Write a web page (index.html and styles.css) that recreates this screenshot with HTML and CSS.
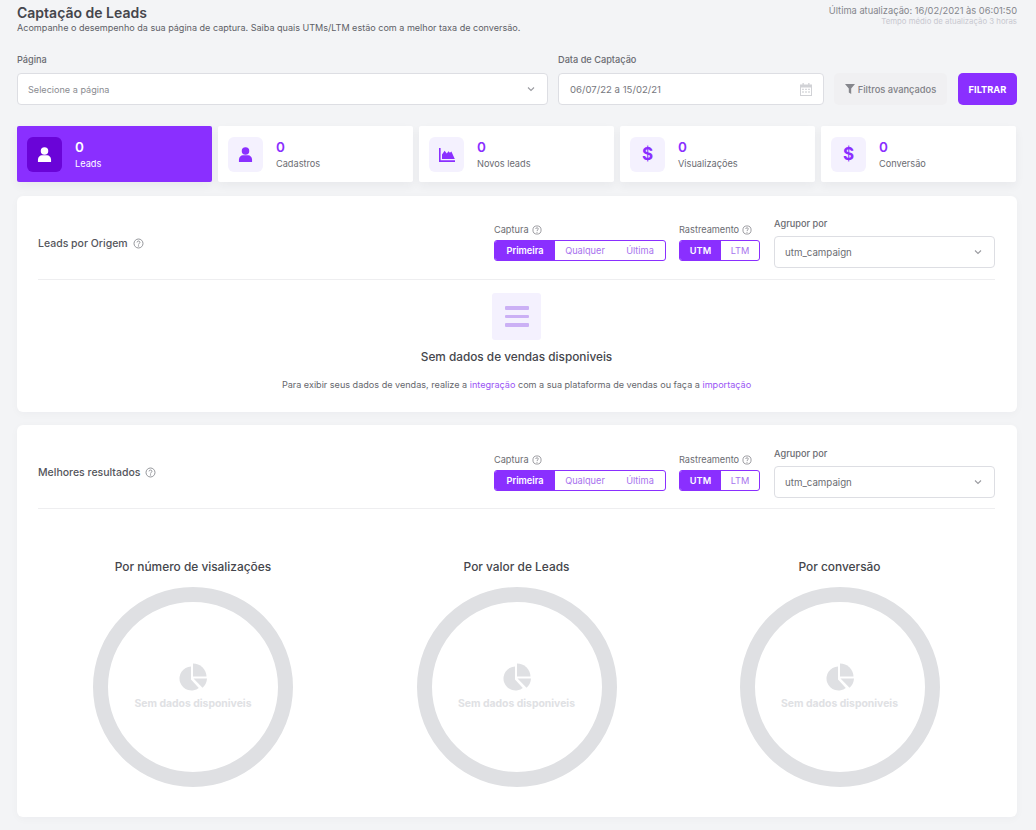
FILE: index.html
```html
<!DOCTYPE html>
<html lang="pt-BR">
<head>
<meta charset="utf-8">
<title>Captação de Leads</title>
<link rel="stylesheet" href="styles.css">
</head>
<body>
<svg class="defs" width="0" height="0" aria-hidden="true">
  <symbol id="user" viewBox="0 0 16 16"><circle cx="8" cy="4.200" r="4"/><path d="M1 16v-2.400C1 10.600 3.400 8.800 5 8.800h6c1.600 0 4 1.800 4 4.800V16z"/></symbol>
  <symbol id="area" viewBox="0 0 16 14"><path d="M0 0h1.600v12.200H16V14H0z"/><path d="M3 11V6.500L5.600 2.800l2.200 2.600 1.700-2.200 1.400 1.600 1.500-1.200L15.800 11z"/></symbol>
  <symbol id="help" viewBox="0 0 12 12"><circle cx="6" cy="6" r="4.900" fill="none" stroke="currentColor"/><path d="M4.400 4.800C4.400 3.900 5.100 3.300 6 3.300s1.600.6 1.600 1.400C7.600 5.900 6 5.900 6 7.200" fill="none" stroke="currentColor"/><circle cx="6" cy="8.700" r=".7" fill="currentColor"/></symbol>
  <symbol id="chev" viewBox="0 0 8 6"><path d="M1 1.500l3 3 3-3" fill="none" stroke="currentColor" stroke-width="1.100"/></symbol>
  <symbol id="pie" viewBox="0 0 30 28"><path d="M13 3.500A12 12 0 1 0 20.800 25L13 16.500z"/><path d="M15 .5A13.500 13.500 0 0 1 28.500 13.500H15z"/><path d="M15.500 15.500H29A13 13 0 0 1 24.500 24.700z"/></symbol>
</svg>
<main class="page">
  <header class="top">
    <div>
      <h1 class="title">Captação de Leads</h1>
      <p class="subtitle">Acompanhe o desempenho da sua página de captura. Saiba quais UTMs/LTM estão com a melhor taxa de conversão.</p>
    </div>
    <div class="updated">
      <div class="updated-main">Última atualização: 16/02/2021 às 06:01:50</div>
      <div class="updated-sub">Tempo médio de atualização 3 horas</div>
    </div>
  </header>

  <section class="filters">
    <div class="field field-page">
      <label class="field-label">Página</label>
      <div class="input"><span class="placeholder">Selecione a página</span><svg class="chev"><use href="#chev"/></svg></div>
    </div>
    <div class="field field-date">
      <label class="field-label">Data de Captação</label>
      <div class="input"><span class="date-value">06/07/22 a 15/02/21</span>
        <svg class="cal" viewBox="0 0 12 13"><path d="M2.500 0h1.300v1.500h4.400V0h1.300v1.500H12V13H0V1.500h2.500zM1 4.500V12h10V4.500z"/><path d="M2.200 5.700h1.600v1.400H2.200zM5.200 5.700h1.600v1.400H5.200zM8.200 5.700h1.600v1.400H8.200zM2.200 8.300h1.600v1.400H2.200zM5.200 8.300h1.600v1.400H5.200zM8.200 8.300h1.600v1.400H8.200z"/></svg>
      </div>
    </div>
    <button class="btn-adv"><svg class="funnel" viewBox="0 0 10 10"><path d="M0 0h10L6.200 4.600V10L3.800 8.400V4.600z"/></svg>Filtros avançados</button>
    <button class="btn-go">FILTRAR</button>
  </section>

  <section class="cards">
    <div class="card card-active"><div class="card-icon"><svg class="ic-user"><use href="#user"/></svg></div><div><div class="card-num">0</div><div class="card-label">Leads</div></div></div>
    <div class="card"><div class="card-icon"><svg class="ic-user"><use href="#user"/></svg></div><div><div class="card-num">0</div><div class="card-label">Cadastros</div></div></div>
    <div class="card"><div class="card-icon"><svg class="ic-area"><use href="#area"/></svg></div><div><div class="card-num">0</div><div class="card-label">Novos leads</div></div></div>
    <div class="card"><div class="card-icon"><span class="dollar">$</span></div><div><div class="card-num">0</div><div class="card-label">Visualizações</div></div></div>
    <div class="card"><div class="card-icon"><span class="dollar">$</span></div><div><div class="card-num">0</div><div class="card-label">Conversão</div></div></div>
  </section>

  <section class="panel panel-origin">
    <div class="panel-head">
      <div class="panel-title">Leads por Origem <svg class="help"><use href="#help"/></svg></div>
      <div class="controls">
        <div class="ctl">
          <div class="ctl-label">Captura <svg class="help help-s"><use href="#help"/></svg></div>
          <div class="seg seg-3"><span class="seg-on seg-w1">Primeira</span><span class="seg-w2">Qualquer</span><span class="seg-w3">Última</span></div>
        </div>
        <div class="ctl">
          <div class="ctl-label">Rastreamento <svg class="help help-s"><use href="#help"/></svg></div>
          <div class="seg seg-2"><span class="seg-on seg-w4">UTM</span><span class="seg-w5">LTM</span></div>
        </div>
        <div class="ctl ctl-group">
          <div class="group-label">Agrupor por</div>
          <div class="input input-group"><span class="group-value">utm_campaign</span><svg class="chev"><use href="#chev"/></svg></div>
        </div>
      </div>
    </div>
    <div class="empty">
      <div class="empty-icon"><i></i><i></i><i></i></div>
      <h2 class="empty-title">Sem dados de vendas disponiveis</h2>
      <p class="empty-text">Para exibir seus dados de vendas, realize a <a href="#">integração</a> com a sua plataforma de vendas ou faça a <a href="#">importação</a></p>
    </div>
  </section>

  <section class="panel panel-best">
    <div class="panel-head">
      <div class="panel-title">Melhores resultados <svg class="help"><use href="#help"/></svg></div>
      <div class="controls">
        <div class="ctl">
          <div class="ctl-label">Captura <svg class="help help-s"><use href="#help"/></svg></div>
          <div class="seg seg-3"><span class="seg-on seg-w1">Primeira</span><span class="seg-w2">Qualquer</span><span class="seg-w3">Última</span></div>
        </div>
        <div class="ctl">
          <div class="ctl-label">Rastreamento <svg class="help help-s"><use href="#help"/></svg></div>
          <div class="seg seg-2"><span class="seg-on seg-w4">UTM</span><span class="seg-w5">LTM</span></div>
        </div>
        <div class="ctl ctl-group">
          <div class="group-label">Agrupor por</div>
          <div class="input input-group"><span class="group-value">utm_campaign</span><svg class="chev"><use href="#chev"/></svg></div>
        </div>
      </div>
    </div>
    <div class="charts">
      <div class="chart"><h3 class="chart-title">Por número de visalizações</h3><div class="ring"><svg class="pie"><use href="#pie"/></svg><span class="ring-text">Sem dados disponiveis</span></div></div>
      <div class="chart"><h3 class="chart-title">Por valor de Leads</h3><div class="ring"><svg class="pie"><use href="#pie"/></svg><span class="ring-text">Sem dados disponiveis</span></div></div>
      <div class="chart"><h3 class="chart-title">Por conversão</h3><div class="ring"><svg class="pie"><use href="#pie"/></svg><span class="ring-text">Sem dados disponiveis</span></div></div>
    </div>
  </section>
</main>
</body>
</html>
```

FILE: styles.css
```css
* { box-sizing: border-box; }
html, body { margin: 0; padding: 0; }
body {
  background: #f3f4f6;
  font-family: Inter, "Noto Sans", sans-serif;
  color: #3f4147;
  overflow: hidden;
  height: 830px;
}
.defs { position: absolute; }
.page { width: 1036px; padding: 4px 19px 0 17px; }

.top { display: flex; justify-content: space-between; height: 46px; }
.title { margin: 0; font-size: 14px; line-height: 17px; font-weight: 600; color: #45464c; }
.subtitle { margin: 1px 0 0; font-size: 9.050px; line-height: 12px; color: #5e5f66; }
.updated { text-align: right; padding-top: 1px; }
.updated-main { font-size: 9.300px; line-height: 12px; color: #85868c; }
.updated-sub { font-size: 7.800px; line-height: 9px; color: #c8c8d0; }

.filters { display: flex; align-items: flex-end; height: 55px; }
.field-label { display: block; font-size: 9.200px; line-height: 12px; font-weight: 500; color: #6a6b71; margin-bottom: 7px; }
.field-page { width: 531px; margin-right: 10px; }
.field-date { width: 266px; margin-right: 10px; }
.input {
  height: 32px; background: #fff; border: 1px solid #dddee3; border-radius: 4px;
  display: flex; align-items: center; justify-content: space-between;
}
.field-page .input { padding: 0 12px 0 10px; }
.field-date .input { padding: 0 11px 0 11px; }
.placeholder { font-size: 9.100px; color: #8a8b90; }
.date-value { font-size: 9.600px; color: #77787e; }
.chev { width: 8px; height: 6px; color: #9a9ba0; }
.cal { width: 12px; height: 13px; fill: #d1d2d6; }
.btn-adv {
  width: 113px; height: 32px; margin-right: 11px; border: 0; border-radius: 5px; background: #f0f0f2;
  font: 500 9.300px Inter, sans-serif; color: #7f8086; display: flex; align-items: center; justify-content: center; gap: 3px; padding: 0;
}
.funnel { width: 10px; height: 10px; fill: #85868c; }
.btn-go {
  width: 59px; height: 32px; border: 0; border-radius: 5px; background: #8a2fff; color: #fff;
  font: 700 9.300px Inter, sans-serif; padding: 0;
}

.cards { display: flex; gap: 6px; margin-top: 21px; }
.card {
  width: 195px; height: 56px; background: #fff; border-radius: 2px; padding: 11px 10px;
  display: flex; gap: 13px; box-shadow: 0 4px 10px rgba(40, 40, 60, .05);
}
.card-icon {
  width: 35px; height: 35px; border-radius: 6px; background: #f4f1fe; flex: none;
  display: flex; align-items: center; justify-content: center; color: #8a2fff;
}
.card-active { background: #8a2fff; }
.card-active .card-icon { background: #6a04d8; }
.card-num { font-size: 13.500px; line-height: 16px; font-weight: 600; color: #8a2fff; margin-top: 2px; }
.card-label { font-size: 9.200px; line-height: 12px; color: #6b6c72; margin-top: 3px; }
.card-active .card-num, .card-active .card-label { color: #fff; }
.ic-user { width: 15px; height: 15px; fill: #8a2fff; }
.card-active .ic-user { fill: #fff; }
.ic-area { width: 16px; height: 14px; fill: #8a2fff; }
.dollar { font-size: 17px; font-weight: 700; line-height: 1; }

.panel { width: 1000px; background: #fff; border-radius: 6px; padding: 0 22px 0 21px; box-shadow: 0 2px 8px rgba(40, 40, 60, .03); }
.panel-origin { margin-top: 14px; height: 216px; }
.panel-best { margin-top: 13px; height: 392px; }
.panel-head {
  height: 84px; border-bottom: 1px solid #eeeef0; display: flex; justify-content: space-between; align-items: flex-start;
}
.panel-title { font-size: 10.500px; font-weight: 500; line-height: 13px; color: #55565c; margin-top: 41px; display: flex; align-items: center; gap: 5px; }
.help { width: 11px; height: 11px; color: #8b8c92; }
.help-s { width: 10px; height: 10px; }
.controls { display: flex; margin-top: 21px; }
.panel-best .controls { margin-top: 22px; }
.ctl { padding-top: 7px; margin-right: 13px; }
.ctl + .ctl-group { margin-left: 1px; }
.ctl-group { padding-top: 1px; margin-right: 0; width: 221px; }
.ctl-label { font-size: 9.200px; line-height: 12px; color: #6b6c72; display: flex; align-items: center; gap: 3px; margin-bottom: 4px; }
.seg {
  display: flex; height: 21px; border: 1px solid #8a2fff; border-radius: 3px; overflow: hidden;
  font-size: 9.200px; color: #a873ee;
}
.seg span { display: flex; align-items: center; justify-content: center; }
.seg-3 { width: 172px; }
.seg-2 { width: 81px; }
.seg-on { background: #8a2fff; color: #fff; font-weight: 600; }
.seg-w1 { width: 60px; }
.seg-w2 { width: 60px; }
.seg-w3 { width: 50px; }
.seg-w4 { width: 41px; }
.seg-w5 { width: 38px; }
.group-label { font-size: 9.200px; line-height: 12px; font-weight: 500; color: #6a6b71; margin-bottom: 6px; }
.input-group { padding: 0 12px 0 10px; }
.group-value { font-size: 9.700px; color: #6b6c72; }

.empty { display: flex; flex-direction: column; align-items: center; padding-top: 13px; }
.empty-icon {
  width: 49px; height: 47px; border-radius: 3px; background: #f4f1fe;
  display: flex; flex-direction: column; align-items: center; justify-content: center; gap: 5px;
}
.empty-icon i { display: block; width: 24px; height: 3.500px; border-radius: 1px; background: #cbb0f5; }
.empty-title { margin: 10px 0 0; font-size: 11.800px; line-height: 14px; font-weight: 500; color: #45464c; }
.empty-text { margin: 15px 0 0; font-size: 9.080px; line-height: 12px; color: #66676d; }
.empty-text a { color: #9a55f5; text-decoration: none; }

.charts { display: grid; grid-template-columns: 324px 323px 323px; margin: 51px -6px 0 -7px; }
.chart { display: flex; flex-direction: column; align-items: center; }
.chart-title { margin: 0 0 13px; font-size: 11.900px; line-height: 14px; font-weight: 500; color: #45464c; }
.ring {
  width: 200px; height: 200px; border-radius: 50%; border: 15px solid #dfe0e3;
  display: flex; flex-direction: column; align-items: center; padding-top: 61px;
}
.pie { width: 30px; height: 28px; fill: #dfe0e3; }
.ring-text { margin-top: 6px; font-size: 10.400px; line-height: 13px; font-weight: 700; color: #e0e1e4; }
```
